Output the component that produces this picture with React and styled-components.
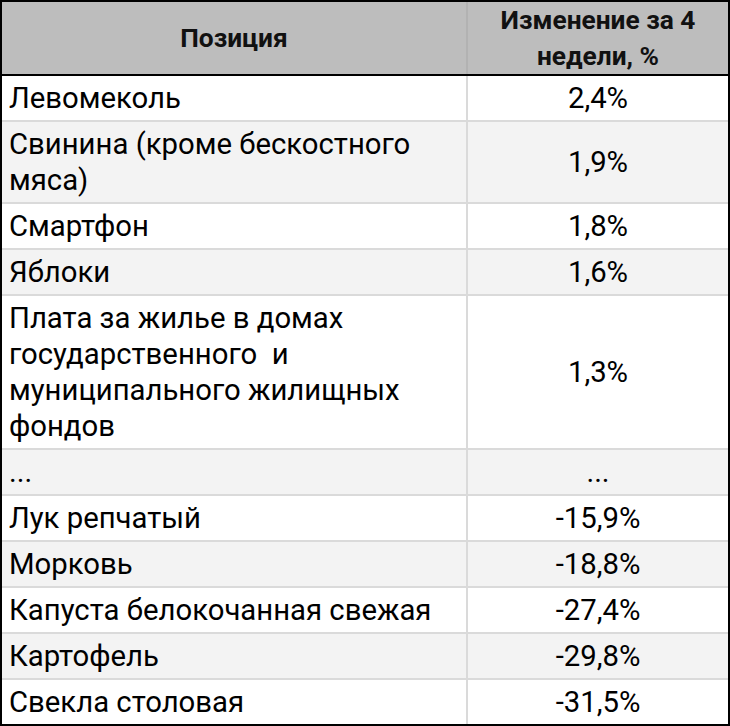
import styled, { createGlobalStyle } from "styled-components";

const GlobalStyle = createGlobalStyle`
  html, body {
    margin: 0;
    padding: 0;
    background: #ffffff;
  }
  body {
    font-family: Roboto, "Noto Sans", "Liberation Sans", sans-serif;
  }
`;

const Table = styled.div`
  width: 730px;
  box-sizing: border-box;
  border: 2px solid #000;
  display: flex;
  flex-direction: column;
`;

const Row = styled.div`
  display: grid;
  grid-template-columns: 466px 1fr;
  background: ${(p) => (p.$shaded ? "#f3f3f3" : "#ffffff")};
  border-bottom: 2px solid #dadada;
  &:last-child {
    border-bottom: none;
  }
`;

const HeadRow = styled.div`
  display: grid;
  grid-template-columns: 466px 1fr;
  background: #bdbdbd;
  border-bottom: 2px solid #000;
`;

const HeadCell = styled.div`
  display: flex;
  align-items: center;
  justify-content: center;
  text-align: center;
  font-size: 26.3px;
  font-weight: 700;
  line-height: 36px;
  color: #111;
  border-right: ${(p) => (p.$divider ? "2px solid #b2b2b2" : "none")};
`;

const NameCell = styled.div`
  padding: 4px 6px 4px 7px;
  font-size: 29.3px;
  line-height: 36px;
  color: #000;
  border-right: 2px solid #dadada;
  white-space: pre-wrap;
`;

const ValueCell = styled.div`
  display: flex;
  align-items: center;
  justify-content: center;
  font-size: 29.3px;
  line-height: 36px;
  color: #000;
`;

const rows = [
  { name: "Левомеколь", value: "2,4%" },
  { name: "Свинина (кроме бескостного\nмяса)", value: "1,9%" },
  { name: "Смартфон", value: "1,8%" },
  { name: "Яблоки", value: "1,6%" },
  {
    name: "Плата за жилье в домах\nгосударственного  и\nмуниципального жилищных\nфондов",
    value: "1,3%",
  },
  { name: "...", value: "..." },
  { name: "Лук репчатый", value: "-15,9%" },
  { name: "Морковь", value: "-18,8%" },
  { name: "Капуста белокочанная свежая", value: "-27,4%" },
  { name: "Картофель", value: "-29,8%" },
  { name: "Свекла столовая", value: "-31,5%" },
];

export default function App() {
  return (
    <>
      <GlobalStyle />
      <Table>
        <HeadRow>
          <HeadCell $divider>Позиция</HeadCell>
          <HeadCell>
            Изменение за 4
            <br />
            недели, %
          </HeadCell>
        </HeadRow>
        {rows.map((row, i) => (
          <Row key={i} $shaded={i % 2 === 1}>
            <NameCell>{row.name}</NameCell>
            <ValueCell>{row.value}</ValueCell>
          </Row>
        ))}
      </Table>
    </>
  );
}
